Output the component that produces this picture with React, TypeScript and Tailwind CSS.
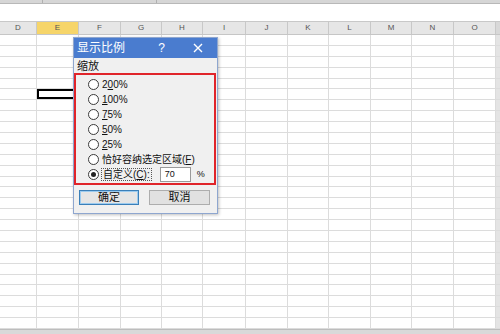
import React from 'react'

const COLS = ['D', 'E', 'F', 'G', 'H', 'I', 'J', 'K', 'L', 'M', 'N', 'O']
const ROWS = 27
const SEL_ROW = 5

function Radio({ on }: { on?: boolean }) {
	return (
		<span className="flex h-[11px] w-[11px] shrink-0 items-center justify-center rounded-full border border-[#3a3a3a] bg-white">
			{on && <span className="h-[5px] w-[5px] rounded-full bg-[#222]" />}
		</span>
	)
}

function Option({ label, on }: { label: React.ReactNode; on?: boolean }) {
	return (
		<div className="flex h-[15px] items-center gap-[3px]">
			<Radio on={on} />
			<span className="leading-none">{label}</span>
		</div>
	)
}

function ZoomDialog() {
	return (
		<div className="absolute left-[73px] top-[37px] flex h-[177px] w-[145px] flex-col border border-[#8ea6cf] bg-[#f0f0f0] text-[10px] text-[#111] shadow-[1px_1px_3px_rgba(0,0,0,0.25)]">
			{/* title bar */}
			<div className="flex h-[20px] items-center bg-[#4a7ccf] pl-[3px] pr-[14px] text-white">
				<span className="text-[12px]">显示比例</span>
				<span className="ml-auto mr-[28px] text-[12px]">?</span>
				<svg width="10" height="10" viewBox="0 0 10 10">
					<path d="M1 1L9 9M9 1L1 9" stroke="white" strokeWidth="1.4" />
				</svg>
			</div>
			<div className="pl-[3px] pt-[2px] text-[11px] leading-[13px]">缩放</div>
			{/* red highlight around the options */}
			<div className="mr-[1px] flex h-[112px] flex-col border-2 border-[#e0242a] pl-[12px] pt-[2px]">
				<Option label={<>2<u>0</u>0%</>} />
				<Option label={<><u>1</u>00%</>} />
				<Option label={<><u>7</u>5%</>} />
				<Option label={<><u>5</u>0%</>} />
				<Option label={<><u>2</u>5%</>} />
				<Option label={<>恰好容纳选定区域(<u>F</u>)</>} />
				<div className="flex h-[15px] items-center gap-[2px]">
					<Radio on />
					<span className="border border-dotted border-[#555] px-[1px] leading-[11px]">
						自定义(<u>C</u>):
					</span>
					<span className="ml-[6px] flex h-[15px] w-[31px] items-center border border-[#9a9a9a] bg-white pl-[4px] text-[9px]">
						70
					</span>
					<span className="ml-[4px] text-[9px]">%</span>
				</div>
			</div>
			<div className="mt-[5px] flex gap-[10px] pl-[5px]">
				<button className="flex h-[15px] w-[60px] items-center justify-center border border-[#3b7fb8] bg-[#e5e5e5] text-[11px] outline outline-1 -outline-offset-2 outline-[#9ccbef]">
					确定
				</button>
				<button className="flex h-[15px] w-[61px] items-center justify-center border border-[#adadad] bg-[#e1e1e1] text-[11px]">
					取消
				</button>
			</div>
		</div>
	)
}

export default function App() {
	return (
		<div
			className="relative flex h-[334px] w-[500px] flex-col overflow-hidden bg-white"
			style={{ fontFamily: '"Liberation Sans", "Noto Sans CJK SC", sans-serif' }}
		>
			{/* ribbon edge */}
			<div className="flex h-[4px] border-b border-[#b8b8b8] bg-[#d6d6d6]">
				<div className="w-[43px] border-r border-[#b0b0b0]" />
				<div className="w-[114px] border-r border-[#b0b0b0]" />
			</div>
			{/* formula bar area */}
			<div className="h-[18px] border-b border-[#c8c8c8] bg-white" />
			{/* column headers */}
			<div className="grid h-[13px] grid-cols-[37px_42px_42px_41px_41px_43px_42px_41px_42px_41px_42px_42px_1fr] border-b border-[#c6c6c6] bg-[#e6e6e6] text-[8px] text-[#555]">
				{COLS.map(c => (
					<div
						key={c}
						className={`flex items-center justify-center border-r border-[#c8c8c8] ${c === 'E' ? 'bg-[#f6d56a]' : ''}`}
					>
						{c}
					</div>
				))}
				<div className="bg-[#d8d8d8]" />
			</div>
			{/* cells */}
			<div className="grid flex-1 grid-rows-[repeat(27,1fr)]">
				{Array.from({ length: ROWS }).map((_, r) => (
					<div
						key={r}
						className="grid grid-cols-[37px_42px_42px_41px_41px_43px_42px_41px_42px_41px_42px_42px_1fr] border-b border-[#dcdcdc]"
					>
						{COLS.map((c, i) => (
							<div
								key={c}
								className={`border-r border-[#dcdcdc] ${
									r === SEL_ROW && i === 1 ? 'border-2 border-black' : ''
								}`}
							/>
						))}
						<div className="bg-[#e4e4e4]" />
					</div>
				))}
			</div>
			{/* bottom scroll bar edge */}
			<div className="h-[5px] border-t border-[#bdbdbd] bg-[#d9d9d9]" />
			<ZoomDialog />
		</div>
	)
}
